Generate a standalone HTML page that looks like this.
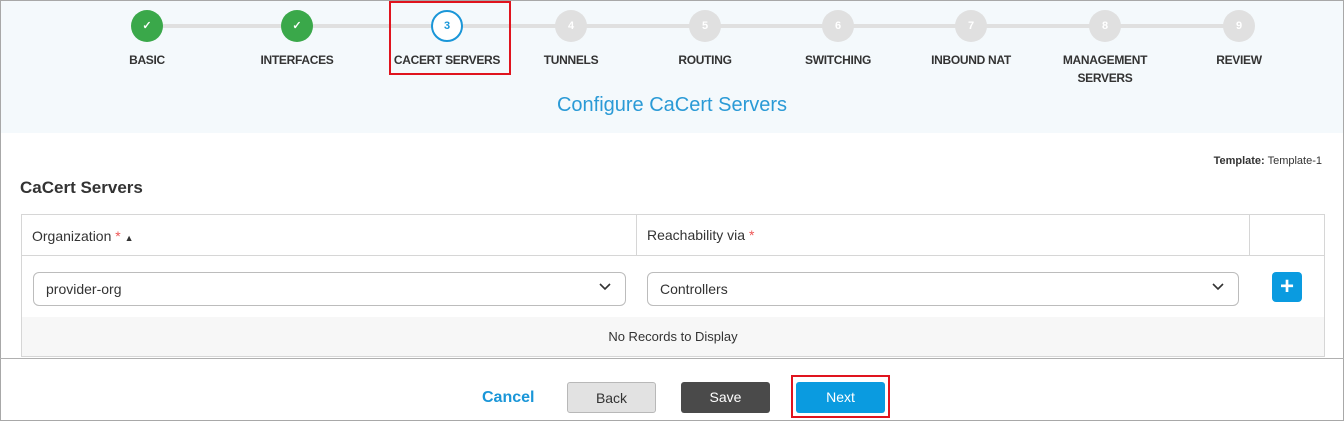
<!DOCTYPE html><html><head><style>
*{margin:0;padding:0;box-sizing:border-box}
html,body{width:1344px;height:421px}
body{position:relative;background:#fff;font-family:"Liberation Sans",sans-serif;overflow:hidden}
.frame{left:0;top:0;width:1344px;height:421px;border:1px solid #a8a8a8}
.abs{position:absolute}
.hdr{left:1px;top:1px;width:1342px;height:132px;background:#f4f9fc}
.line{left:147px;top:24px;width:1092px;height:4px;background:#e0e0e0}
.c{width:32px;height:32px;border-radius:50%;background:#e0e0e0;color:#fff;font-size:11px;font-weight:bold;text-align:center;line-height:32px;top:10px}
.g{background:#3aa84a}
.l{font-size:12px;font-weight:bold;color:#333;text-align:center;width:140px;top:51px;line-height:18px;letter-spacing:-0.3px}
.sel{border:1px solid #bcbcbc;border-radius:6px;height:34px;top:272px;font-size:14px;color:#333;padding:8px 12px}
.chev{position:absolute;right:14px;top:10px}
.btn{top:382px;width:89px;height:31px;border-radius:3px;font-size:14px;text-align:center;line-height:31px}
</style></head><body>
<div class="abs hdr"></div>
<div class="abs frame"></div>
<div class="abs line"></div>
<div class="abs c g" style="left:131px">✓</div>
<div class="abs c g" style="left:281px">✓</div>
<div class="abs c" style="left:431px;background:#fff;border:2px solid #1a96d8;color:#1a96d8;line-height:28px">3</div>
<div class="abs c" style="left:555px">4</div>
<div class="abs c" style="left:689px">5</div>
<div class="abs c" style="left:822px">6</div>
<div class="abs c" style="left:955px">7</div>
<div class="abs c" style="left:1089px">8</div>
<div class="abs c" style="left:1223px">9</div>
<div class="abs l" style="left:77px">BASIC</div>
<div class="abs l" style="left:227px">INTERFACES</div>
<div class="abs l" style="left:377px">CACERT SERVERS</div>
<div class="abs l" style="left:501px">TUNNELS</div>
<div class="abs l" style="left:635px">ROUTING</div>
<div class="abs l" style="left:768px">SWITCHING</div>
<div class="abs l" style="left:901px">INBOUND NAT</div>
<div class="abs l" style="left:1035px">MANAGEMENT<br>SERVERS</div>
<div class="abs l" style="left:1169px">REVIEW</div>
<div class="abs" style="left:389px;top:1px;width:122px;height:74px;border:2px solid #e0141e"></div>
<div class="abs" style="left:0;width:1344px;top:94px;text-align:center;font-size:20px;color:#2a9ad6">Configure CaCert Servers</div>
<div class="abs" style="right:22px;top:155px;font-size:11px;color:#333"><b>Template:</b> Template-1</div>
<div class="abs" style="left:20px;top:178px;font-size:17px;font-weight:bold;color:#333">CaCert Servers</div>
<div class="abs" style="left:21px;top:214px;width:1304px;height:143px;border:1px solid #d6d6d6"></div>
<div class="abs" style="left:22px;top:255px;width:1302px;height:1px;background:#d6d6d6"></div>
<div class="abs" style="left:636px;top:215px;width:1px;height:40px;background:#d6d6d6"></div>
<div class="abs" style="left:1249px;top:215px;width:1px;height:40px;background:#d6d6d6"></div>
<div class="abs" style="left:32px;top:228px;font-size:14px;color:#333">Organization <span style="color:#e55">*</span> <span style="font-size:9px">▲</span></div>
<div class="abs" style="left:647px;top:227px;font-size:14px;color:#333">Reachability via <span style="color:#e55">*</span></div>
<div class="abs sel" style="left:33px;width:593px">provider-org<svg class="chev" width="12" height="8" viewBox="0 0 12 8"><path d="M1 1l5 5 5-5" fill="none" stroke="#333" stroke-width="1.6"/></svg></div>
<div class="abs sel" style="left:647px;width:592px">Controllers<svg class="chev" width="12" height="8" viewBox="0 0 12 8"><path d="M1 1l5 5 5-5" fill="none" stroke="#333" stroke-width="1.6"/></svg></div>
<div class="abs" style="left:1272px;top:272px;width:30px;height:30px;border-radius:4px;background:#0a9be0;color:#fff;font-size:24px;font-weight:bold;text-align:center;line-height:29px">+</div>
<div class="abs" style="left:22px;top:317px;width:1302px;height:39px;background:#f7f7f7;text-align:center;font-size:13px;color:#333;line-height:40px">No Records to Display</div>
<div class="abs" style="left:0;top:358px;width:1344px;height:1px;background:#b0b0b0"></div>
<div class="abs" style="left:482px;top:389px;font-size:16px;font-weight:bold;color:#1a96d8">Cancel</div>
<div class="abs btn" style="left:567px;background:#e2e2e2;border:1px solid #b8b8b8;color:#333">Back</div>
<div class="abs btn" style="left:681px;background:#4a4a4a;color:#fff">Save</div>
<div class="abs btn" style="left:796px;background:#0a9be0;color:#fff">Next</div>
<div class="abs" style="left:791px;top:375px;width:99px;height:43px;border:2px solid #e0141e"></div>
</body></html>
